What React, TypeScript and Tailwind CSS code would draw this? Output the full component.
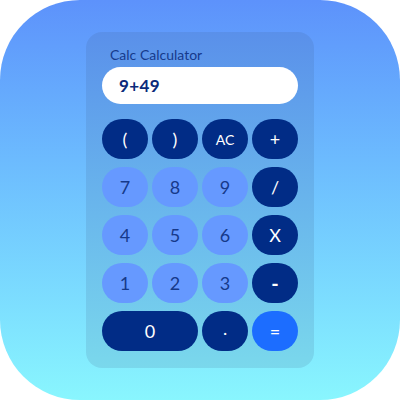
import React from 'react';

type Key = { label: string; kind: 'dark' | 'light' | 'eq'; wide?: boolean; size?: string };

const keys: Key[] = [
  { label: '(', kind: 'dark' },
  { label: ')', kind: 'dark' },
  { label: 'AC', kind: 'dark', size: 'text-[14px]' },
  { label: '+', kind: 'dark' },
  { label: '7', kind: 'light' },
  { label: '8', kind: 'light' },
  { label: '9', kind: 'light' },
  { label: '/', kind: 'dark' },
  { label: '4', kind: 'light' },
  { label: '5', kind: 'light' },
  { label: '6', kind: 'light' },
  { label: 'X', kind: 'dark' },
  { label: '1', kind: 'light' },
  { label: '2', kind: 'light' },
  { label: '3', kind: 'light' },
  { label: '-', kind: 'dark', size: 'text-[20px] font-bold' },
  { label: '0', kind: 'dark', wide: true },
  { label: '.', kind: 'dark', size: 'text-[18px] pb-[6px]' },
  { label: '=', kind: 'eq' },
];

const kindClass = {
  dark: 'bg-[#012c86] text-white',
  light: 'bg-[#6699ff] text-[#16398a]',
  eq: 'bg-[#1c6dff] text-white',
};

export default function App() {
  return (
    <div className="w-[400px] h-[400px] bg-white">
      <div
        className="w-[400px] h-[400px] rounded-[80px] bg-gradient-to-b from-[#5d92fb] to-[#89f6fe] flex items-center justify-center"
        style={{ fontFamily: 'Lato, "Open Sans", sans-serif' }}
      >
        <div className="w-[228px] h-[336px] rounded-[16px] bg-gradient-to-b from-[#5a90ea] to-[#7ad8ec] px-4 pt-[13px]">
          <p className="pl-2 text-[14px] leading-[20px] text-[#163a8c]">Calc Calculator</p>
          <div className="mt-[2px] h-[37px] rounded-full bg-white flex items-center pl-[17px]">
            <span className="text-[17px] font-bold text-[#0b2a7a] tracking-wide">9+49</span>
          </div>
          <div className="mt-[15px] grid grid-cols-4 gap-x-[4px] gap-y-[8px]">
            {keys.map((k) => (
              <button
                key={k.label}
                className={`h-[40px] rounded-full flex items-center justify-center ${kindClass[k.kind]} ${
                  k.wide ? 'col-span-2' : ''
                } ${k.size ?? 'text-[18px]'}`}
              >
                {k.label}
              </button>
            ))}
          </div>
        </div>
      </div>
    </div>
  );
}
